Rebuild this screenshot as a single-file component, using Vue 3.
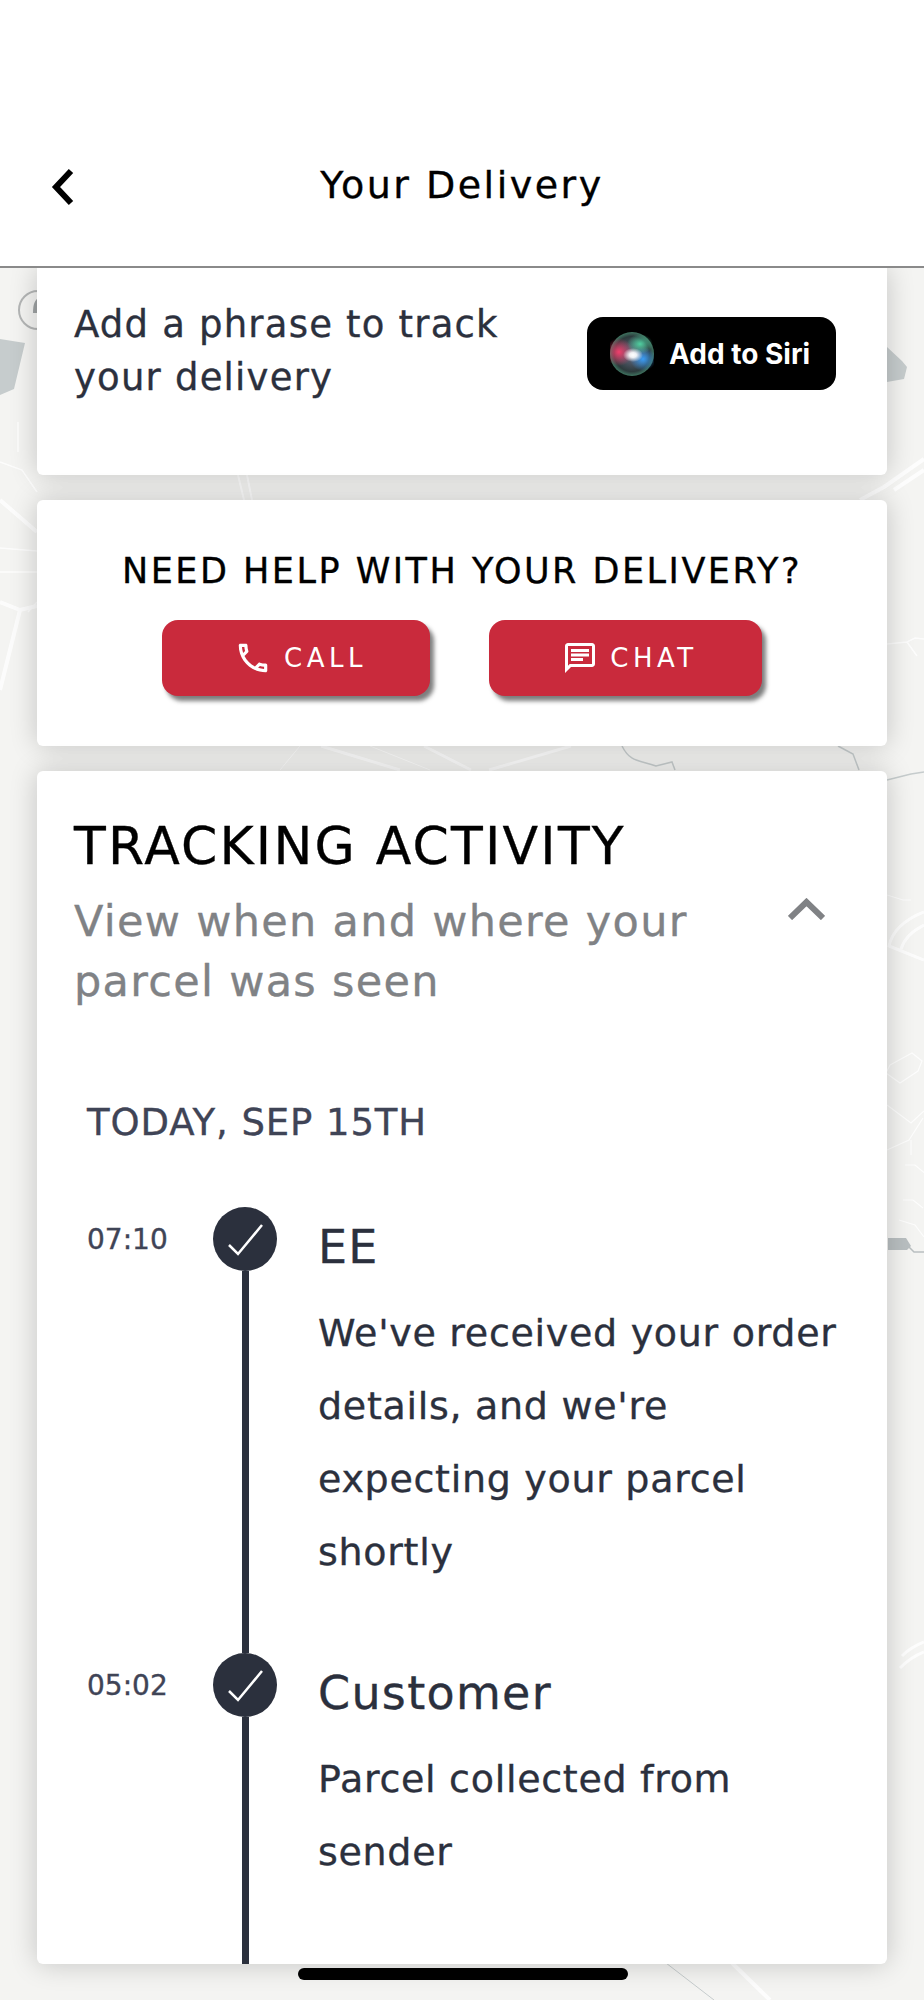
<template>
  <div class="screen">
    <svg class="map" width="924" height="2000" viewBox="0 0 924 2000" fill="none">
      <circle cx="38" cy="310" r="19" stroke="#b4b6b6" stroke-width="2" />
      <path d="M38 298c-4 3-5 8-5 15h5z" fill="#9fa3a4" />
      <path d="M0 339l25 4-11 46-14 6zM887 347l15 14 5 6-3 12-17 3z" fill="#c6cccd" />
      <g opacity="0.8">
        <path d="M0 500l37 32M0 602l20 8 17-4M20 610L0 690" stroke="#fff" stroke-width="4" />
        <path d="M0 462l22 8 15 22M18 440v-18 30M0 548l37 3M0 572h37M28 612l9-10" stroke="#fff" stroke-width="1.5" />
        <path d="M924 459l-40 28-24 13M924 470l-30 20" stroke="#fff" stroke-width="4" />
        <path d="M238 475l6 25M247 475l5 25" stroke="#fff" stroke-width="2" />
        <path d="M321 746l79 24M424 746l47 24M571 746l-82 24" stroke="#fff" stroke-width="3" />
        <path d="M300 746l-20 24M370 746l60 24" stroke="#fff" stroke-width="1" />
        <path d="M887 644l20-2 8-4 9 1M907 642l10 14" stroke="#fff" stroke-width="1.5" />
        <path d="M924 912c-20 8-32 20-35 34l35 14M924 925c-12 6-20 14-23 24" stroke="#fff" stroke-width="3" />
        <path d="M887 895l16 5h8M890 1065l22-12 10 8-4 10-18 12-14-10zM887 1105l24 18 13-12M887 1150l22-10 14-22M911 1140v15M905 1165h10l24 20M903 1200h10l10 8M899 1220l16 5 9 12" stroke="#fff" stroke-width="1.2" />
        <path d="M924 1642c-10 4-16 8-22 14M924 1652c-10 4-16 8-24 16" stroke="#fff" stroke-width="3" />
        <path d="M732 1963l38 37" stroke="#fff" stroke-width="4" />
      </g>
      <path d="M622 746c8 16 16 14 34 20l16-4 3 8M838 746l15 8 6 16" stroke="#c6cccd" stroke-width="1.5" />
      <path d="M887 780l24-6 13-2" stroke="#c6cccd" stroke-width="1.5" />
      <path d="M888 1238h18l5 8-4 4-19 0z" fill="#b9bfc1" />
      <path d="M908 1246l6 6h10" stroke="#b9bfc1" stroke-width="1.5" />
      <path d="M666 1963l48 37" stroke="#c6cccd" stroke-width="1" />
    </svg>

    <header class="top-bar">
      <svg class="back" width="26" height="38" viewBox="0 0 26 38" fill="none">
        <path d="M21 3L6 19l15 16" stroke="#000" stroke-width="6" />
      </svg>
      <h1>Your Delivery</h1>
    </header>

    <main class="cards">
      <section class="card siri-card">
        <p class="siri-text">Add a phrase to track your delivery</p>
        <div class="siri-button">
          <svg class="orb" width="44" height="44" viewBox="0 0 44 44">
            <defs>
              <radialGradient id="orb-base" cx="0.5" cy="0.5" r="0.5">
                <stop offset="0" stop-color="#6b6f88" />
                <stop offset="0.8" stop-color="#2c3a3c" />
                <stop offset="1" stop-color="#3f7460" />
              </radialGradient>
              <radialGradient id="orb-red" cx="0.5" cy="0.5" r="0.5">
                <stop offset="0" stop-color="#f23e6c" />
                <stop offset="1" stop-color="#f23e6c" stop-opacity="0" />
              </radialGradient>
              <radialGradient id="orb-blue" cx="0.5" cy="0.5" r="0.5">
                <stop offset="0" stop-color="#3a9cf5" />
                <stop offset="1" stop-color="#3a9cf5" stop-opacity="0" />
              </radialGradient>
              <radialGradient id="orb-green" cx="0.5" cy="0.5" r="0.5">
                <stop offset="0" stop-color="#4fd0a0" />
                <stop offset="1" stop-color="#4fd0a0" stop-opacity="0" />
              </radialGradient>
              <radialGradient id="orb-core" cx="0.5" cy="0.5" r="0.5">
                <stop offset="0" stop-color="#fff" />
                <stop offset="0.35" stop-color="#fff" stop-opacity="0.9" />
                <stop offset="1" stop-color="#fff" stop-opacity="0" />
              </radialGradient>
            </defs>
            <circle cx="22" cy="22" r="22" fill="url(#orb-base)" />
            <ellipse cx="9" cy="20" rx="14" ry="14" fill="url(#orb-red)" />
            <ellipse cx="33" cy="27" rx="13" ry="12" fill="url(#orb-blue)" />
            <ellipse cx="30" cy="12" rx="13" ry="10" fill="url(#orb-green)" />
            <ellipse cx="23" cy="23" rx="10" ry="7" fill="url(#orb-core)" />
          </svg>
          <span>Add to Siri</span>
        </div>
      </section>

      <section class="card help-card">
        <h2>NEED HELP WITH YOUR DELIVERY?</h2>
        <div class="help-actions">
          <button class="action call" type="button">
            <svg width="38" height="38" viewBox="0 0 24 24" fill="#fff">
              <path d="M6.54 5c.06.89.21 1.76.45 2.59l-1.2 1.2c-.41-1.2-.67-2.47-.76-3.79h1.51m9.86 12.02c.85.24 1.72.39 2.6.45v1.49c-1.32-.09-2.59-.35-3.8-.75l1.2-1.19M7.5 3H4c-.55 0-1 .45-1 1 0 9.39 7.61 17 17 17 .55 0 1-.45 1-1v-3.49c0-.55-.45-1-1-1-1.24 0-2.45-.2-3.57-.57-.1-.04-.21-.05-.31-.05-.26 0-.51.1-.71.29l-2.2 2.2c-2.83-1.45-5.15-3.76-6.59-6.59l2.2-2.2c.28-.28.36-.67.25-1.02C8.7 6.45 8.5 5.25 8.5 4c0-.55-.45-1-1-1z" />
            </svg>
            <span>CALL</span>
          </button>
          <button class="action chat" type="button">
            <svg width="36" height="36" viewBox="0 0 24 24" fill="#fff">
              <path d="M20 2H4c-1.1 0-2 .9-2 2v18l4-4h14c1.100 0 2-.9 2-2V4c0-1.100-.9-2-2-2zm0 14H5.170L4 17.170V4h16v12zM6 12h8v2H6zm0-3h12v2H6zm0-3h12v2H6z" />
            </svg>
            <span>CHAT</span>
          </button>
        </div>
      </section>

      <section class="card tracking-card">
        <div class="tracking-head">
          <div>
            <h2>TRACKING ACTIVITY</h2>
            <p>View when and where your parcel was seen</p>
          </div>
          <svg class="chevron" width="37" height="22" viewBox="0 0 37 22" fill="none">
            <path d="M2 20L18.500 4 35 20" stroke="#808285" stroke-width="6" />
          </svg>
        </div>

        <h3 class="date">TODAY, SEP 15TH</h3>

        <div v-for="item in events" :key="item.time" class="event" :class="item.cls">
          <span class="time">{{ item.time }}</span>
          <div class="rail">
            <span class="dot">
              <svg width="36" height="36" viewBox="0 0 36 36" fill="none">
                <path d="M2 24l9 9L35 4" stroke="#fff" stroke-width="2.500" />
              </svg>
            </span>
            <span class="line"></span>
          </div>
          <div class="body">
            <h4>{{ item.title }}</h4>
            <p>{{ item.text }}</p>
          </div>
        </div>
      </section>
    </main>

    <div class="home-bar"></div>
  </div>
</template>

<script setup>
const events = [
  {
    time: "07:10",
    title: "EE",
    text: "We've received your order details, and we're expecting your parcel shortly",
    cls: "first",
  },
  {
    time: "05:02",
    title: "Customer",
    text: "Parcel collected from sender",
    cls: "last",
  },
];
</script>

<style>
html,
body {
  margin: 0;
  background: #f4f4f2;
}
</style>

<style scoped>
.screen {
  position: relative;
  width: 924px;
  height: 2000px;
  overflow: hidden;
  background: #f4f4f2;
  font-family: "DejaVu Sans", sans-serif;
  color: #2b303d;
  -webkit-text-stroke: 0.35px currentColor;
}

.map {
  position: absolute;
  top: 0;
  left: 0;
}

.top-bar {
  position: relative;
  z-index: 2;
  display: flex;
  align-items: flex-start;
  justify-content: center;
  box-sizing: border-box;
  height: 268px;
  padding-top: 160px;
  background: #fff;
  border-bottom: 2px solid #8a8a8a;
}

.top-bar h1 {
  margin: 0;
  font-size: 38px;
  line-height: 50px;
  font-weight: 400;
  letter-spacing: 2.5px;
  color: #000;
}

.back {
  position: absolute;
  top: 168px;
  left: 50px;
}

.cards {
  position: relative;
  display: flex;
  flex-direction: column;
  gap: 25px;
  padding: 0 37px;
}

.card {
  box-sizing: border-box;
  background: #fff;
  border-radius: 6px;
  box-shadow: 0 0 28px rgba(0, 0, 0, 0.2);
}

.siri-card {
  display: flex;
  align-items: flex-start;
  justify-content: space-between;
  height: 207px;
  padding: 30px 51px 0 37px;
  border-radius: 0 0 6px 6px;
}

.siri-text {
  width: 460px;
  margin: 0;
  font-size: 37px;
  line-height: 53px;
  letter-spacing: 1.2px;
}

.siri-button {
  display: flex;
  align-items: center;
  gap: 15px;
  flex: none;
  box-sizing: border-box;
  width: 249px;
  height: 73px;
  margin-top: 19px;
  padding-left: 23px;
  background: #000;
  border-radius: 16px;
  color: #fff;
  font-family: Inter, sans-serif;
  font-size: 28px;
  font-weight: 700;
  white-space: nowrap;
  -webkit-text-stroke: 0;
}

.help-card {
  height: 246px;
  padding-top: 48px;
  text-align: center;
}

.help-card h2 {
  margin: 0;
  font-size: 35px;
  line-height: 46px;
  font-weight: 400;
  letter-spacing: 2.5px;
  color: #000;
  white-space: nowrap;
}

.help-actions {
  display: flex;
  justify-content: center;
  gap: 59px;
  margin-top: 26px;
}

.action {
  display: flex;
  align-items: center;
  justify-content: center;
  gap: 12px;
  height: 76px;
  padding: 0 0 0 9px;
  border: 0;
  border-radius: 16px;
  background: #c92a3c;
  box-shadow: 4px 5px 4px rgba(40, 40, 40, 0.6);
  color: #fff;
  font-family: "DejaVu Sans", sans-serif;
  font-size: 26px;
  letter-spacing: 4.5px;
  -webkit-text-stroke: 0;
}

.call {
  width: 268px;
}

.chat {
  width: 273px;
}

.tracking-card {
  height: 1193px;
  padding: 43px 0 0 37px;
  overflow: hidden;
}

.tracking-head {
  display: flex;
  justify-content: space-between;
  height: 284px;
  padding-right: 62px;
}

.tracking-head h2 {
  margin: 0;
  font-size: 52px;
  line-height: 64px;
  font-weight: 400;
  letter-spacing: 2.2px;
  color: #000;
  white-space: nowrap;
}

.tracking-head p {
  width: 650px;
  margin: 13px 0 0;
  font-size: 43px;
  line-height: 60px;
  letter-spacing: 1.3px;
  color: #808285;
}

.chevron {
  margin-top: 84px;
}

.date {
  margin: 0 0 0 13px;
  font-size: 37px;
  line-height: 50px;
  font-weight: 400;
  letter-spacing: 0.9px;
  color: #3f4456;
}

.event {
  display: grid;
  grid-template-columns: 126px 64px 1fr;
  margin-left: 13px;
}

.first {
  height: 446px;
  margin-top: 59px;
}

.last {
  height: 400px;
}

.time {
  padding-top: 13px;
  font-size: 28px;
  line-height: 40px;
  color: #3f4456;
}

.rail {
  display: flex;
  flex-direction: column;
  align-items: center;
}

.dot {
  display: flex;
  align-items: center;
  justify-content: center;
  flex: none;
  width: 64px;
  height: 64px;
  border-radius: 50%;
  background: #2b303d;
}

.line {
  flex: 1;
  width: 7px;
  background: #2b303d;
}

.body {
  padding: 10px 0 0 41px;
}

.body h4 {
  margin: 0;
  font-size: 46px;
  line-height: 60px;
  font-weight: 400;
  letter-spacing: 1.3px;
}

.body p {
  width: 530px;
  margin: 20px 0 0;
  font-size: 38px;
  line-height: 73px;
  letter-spacing: 0.7px;
}

.home-bar {
  position: absolute;
  top: 1968px;
  left: 298px;
  width: 330px;
  height: 12px;
  border-radius: 6px;
  background: #000;
}
</style>
